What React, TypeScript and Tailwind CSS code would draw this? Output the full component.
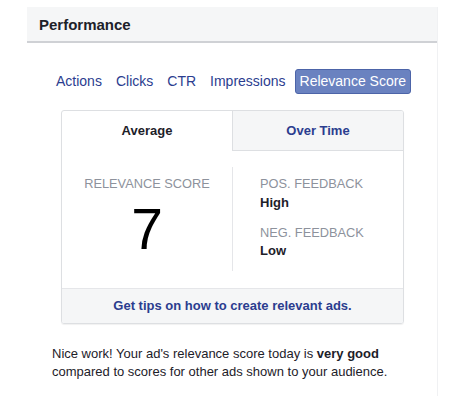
export default function App() {
  const tabs = ['Actions', 'Clicks', 'CTR', 'Impressions'];

  return (
    <div className="w-[450px] h-[396px] bg-white pt-[7px] pl-[27px] pr-[12px] font-['Liberation_Sans',Arial,sans-serif] overflow-hidden">
      <div className="h-full border-r border-[#f0f1f3]">
        {/* Header */}
        <div className="h-[36px] bg-[#f5f6f7] border-b-2 border-[#cfd1d5] flex items-center pl-[12px] pt-[2px]">
          <h1 className="text-[15px] font-bold text-[#1d2129]">Performance</h1>
        </div>

        {/* Metric tabs */}
        <div className="mt-[26px] ml-[24px] flex items-center gap-[4px] h-[25px]">
          {tabs.map(t => (
            <span key={t} className="px-[5px] text-[14px] text-[#2b3d8f] leading-[25px]">{t}</span>
          ))}
          <span className="px-[4px] h-[25px] leading-[23px] text-[14px] text-white bg-[#6a82c0] border border-[#4c64a8] rounded-[3px]">
            Relevance Score
          </span>
        </div>

        {/* Card */}
        <div className="ml-[34px] mt-[16px] w-[343px] border border-[#dddfe2] rounded-[3px] shadow-[0_1px_1px_rgba(0,0,0,0.06)] overflow-hidden">
          <div className="flex h-[40px]">
            <div className="w-[170px] flex items-center justify-center text-[13px] font-bold text-[#1d2129]">Average</div>
            <div className="flex-1 flex items-center justify-center bg-[#f5f6f7] border-l border-b border-[#dddfe2] text-[13px] font-bold text-[#2b3d8f]">
              Over Time
            </div>
          </div>

          <div className="flex h-[137px] pt-[16px] pb-[17px]">
            <div className="w-[170px] flex flex-col items-center">
              <p className="mt-[9px] text-[12.8px] leading-[15px] text-[#8d929c]">RELEVANCE SCORE</p>
              <p className="mt-[10px] text-[57px] leading-[57px] text-black">7</p>
            </div>
            <div className="w-px bg-[#e5e6e9]" />
            <div className="pl-[27px] flex flex-col">
              <p className="mt-[9px] text-[12.8px] leading-[15px] text-[#8d929c]">POS. FEEDBACK</p>
              <p className="mt-[4px] text-[13px] leading-[16px] font-bold text-[#1d2129]">High</p>
              <p className="mt-[14px] text-[12.8px] leading-[15px] text-[#8d929c]">NEG. FEEDBACK</p>
              <p className="mt-[3px] text-[13px] leading-[16px] font-bold text-[#1d2129]">Low</p>
            </div>
          </div>

          <div className="h-[35px] bg-[#f5f6f7] border-t border-[#e5e6e9] flex items-center justify-center text-[13px] font-bold text-[#2b3d8f]">
            Get tips on how to create relevant ads.
          </div>
        </div>

        {/* Summary */}
        <p className="mt-[21px] ml-[25px] w-[355px] text-[13px] leading-[18px] text-[#1d2129]">
          Nice work! Your ad's relevance score today is <b>very good</b> compared to scores for other ads shown to your audience.
        </p>
      </div>
    </div>
  );
}
